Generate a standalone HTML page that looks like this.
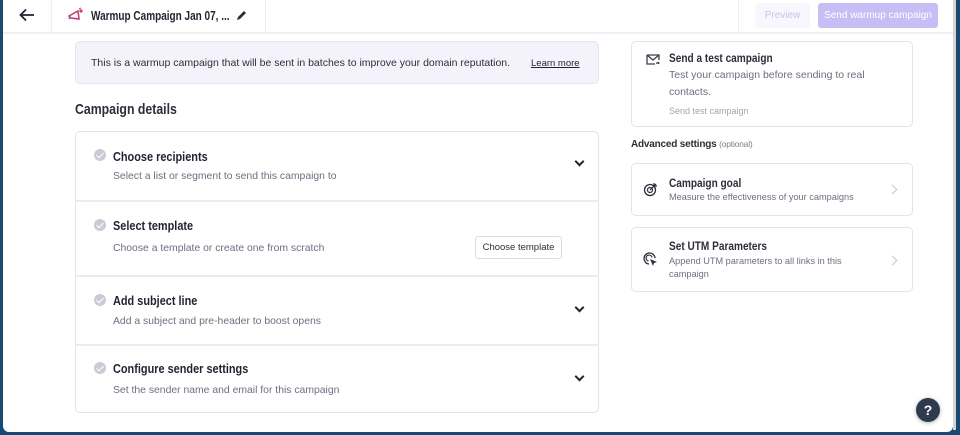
<!DOCTYPE html>
<html><head><style>
*{box-sizing:border-box;margin:0;padding:0}
body{width:960px;height:435px;overflow:hidden;background:#174a73;font-family:"Liberation Sans",sans-serif;color:#1f2430;position:relative}
.app{position:absolute;left:3px;top:0;width:950px;height:432px;background:#fff;border-radius:0 0 6px 6px;overflow:hidden}
.sb{position:absolute;left:953px;top:0;width:3px;height:430px;background:#d4d4d4}
.hdr{position:absolute;left:0;top:0;width:950px;height:34px;border-bottom:2px solid #f0f0f2}
.vd{position:absolute;top:0;height:34px;width:1px;background:#eeeef0}
.t{position:absolute;white-space:nowrap}
.sx{transform-origin:left center;transform:scaleX(.84)}
.box{position:absolute;border:1px solid #e3e3e8;border-radius:5px;background:#fff}
.row{position:absolute;left:0;width:523px;border-top:2px solid #ececef}
.ck{position:absolute;left:18px;width:12px;height:12px;border-radius:50%;background:#c9ccd4}
.ck:after{content:"";position:absolute;left:4px;top:2px;width:3px;height:6px;border:solid #fff;border-width:0 1.3px 1.3px 0;transform:rotate(45deg)}
.rt{position:absolute;left:37px;font-size:13px;font-weight:bold;color:#1f2430;white-space:nowrap;transform-origin:left center;transform:scaleX(.84)}
.rs{position:absolute;left:37px;font-size:10.4px;color:#6b7080;white-space:nowrap}
.chev{position:absolute;right:16px;width:7px;height:7px;border:solid #1f2430;border-width:0 2px 2px 0;transform:rotate(45deg)}
.rc{position:absolute;right:16px;width:7px;height:7px;border:solid #c4c6cc;border-width:1.5px 1.5px 0 0;transform:rotate(45deg)}
</style></head><body>
<div class="app">
<div class="hdr">
 <svg class="t" style="left:16px;top:8px" width="16" height="14" viewBox="0 0 16 14"><path d="M15 7H2M7 1.5L1.5 7 7 12.5" stroke="#1f2430" stroke-width="1.8" fill="none"/></svg>
 <div class="vd" style="left:48px"></div>
 <svg class="t" style="left:64px;top:7px" width="18" height="16" viewBox="0 0 18 16"><path d="M2 9l9-5 1 8-8-1z" fill="none" stroke="#c03a6a" stroke-width="1.5"/><path d="M3 10l-1 2" stroke="#7b5fd6" stroke-width="1.5"/><circle cx="14" cy="4" r="1.6" fill="#e0395f"/><path d="M12 2l2-1" stroke="#7b5fd6" stroke-width="1.2"/></svg>
 <div class="t sx" style="left:88px;top:9px;font-size:12.5px;font-weight:bold;transform:scaleX(.8)">Warmup Campaign Jan 07, ...</div>
 <svg class="t" style="left:233px;top:9px" width="12" height="12" viewBox="0 0 12 12"><path d="M1 11l1-3 6-6 2 2-6 6z" fill="#2b2f38"/></svg>
 <div class="vd" style="left:262px"></div>
 <div class="vd" style="left:735px"></div>
 <div class="t" style="left:752px;top:3px;width:55px;height:25px;background:#f8f7fd;border-radius:3px;color:#c8c2ea;font-size:10px;text-align:center;line-height:25px">Preview</div>
 <div class="t" style="left:815px;top:3px;width:120px;height:25px;background:#c8bdf5;border-radius:3px;color:#fff;font-size:10px;text-align:center;line-height:25px">Send warmup campaign</div>
</div>

<div class="box" style="left:72px;top:41px;width:524px;height:43px;background:#f4f3fb;border-color:#e6e3f3">
 <div class="t" style="left:15px;top:15px;font-size:10.5px;color:#2b2f38">This is a warmup campaign that will be sent in batches to improve your domain reputation.</div>
 <div class="t" style="left:455px;top:16px;font-size:9.5px;color:#1f2430;text-decoration:underline">Learn more</div>
</div>
<div class="t sx" style="left:72px;top:101px;font-size:15px;font-weight:bold;color:#2b2f38;transform:scaleX(.82)">Campaign details</div>

<div class="box" style="left:72px;top:131px;width:524px;height:282px;overflow:hidden">
 <div class="row" style="top:-2px;height:70px;border-top:none">
  <div class="ck" style="top:19px"></div><div class="rt" style="top:19px">Choose recipients</div><div class="rs" style="top:41px">Select a list or segment to send this campaign to</div><div class="chev" style="top:28px"></div>
 </div>
 <div class="row" style="top:68px;height:75px">
  <div class="ck" style="top:17px"></div><div class="rt" style="top:16px">Select template</div><div class="rs" style="top:41px">Choose a template or create one from scratch</div>
  <div class="t" style="left:399px;top:34px;width:87px;height:23px;border:1px solid #dcdce0;border-radius:3px;font-size:9.5px;line-height:21px;text-align:center;color:#2b2f38">Choose template</div>
 </div>
 <div class="row" style="top:143px;height:69px">
  <div class="ck" style="top:17px"></div><div class="rt" style="top:16px">Add subject line</div><div class="rs" style="top:39px">Add a subject and pre-header to boost opens</div><div class="chev" style="top:27px"></div>
 </div>
 <div class="row" style="top:212px;height:70px">
  <div class="ck" style="top:16px"></div><div class="rt" style="top:15px">Configure sender settings</div><div class="rs" style="top:39px">Set the sender name and email for this campaign</div><div class="chev" style="top:27px"></div>
 </div>
</div>

<div class="box" style="left:628px;top:41px;width:282px;height:86px">
 <svg class="t" style="left:14px;top:12px" width="14" height="12" viewBox="0 0 14 12"><path d="M1 1h12v5M1 1v9h8M1 1l6 5 6-5" fill="none" stroke="#3a3f4a" stroke-width="1.3"/><path d="M10 9h3M12 8l1 1-1 1" stroke="#3a3f4a" stroke-width="1.2" fill="none"/></svg>
 <div class="t sx" style="left:37px;top:9px;font-size:12px;font-weight:bold;color:#2b2f38">Send a test campaign</div>
 <div class="t" style="left:37px;top:25px;font-size:10.5px;color:#6b7080;line-height:16.5px;white-space:normal;width:215px">Test your campaign before sending to real contacts.</div>
 <div class="t" style="left:37px;top:64px;font-size:9px;color:#a3a6b0">Send test campaign</div>
</div>
<div class="t" style="left:628px;top:139px;font-size:10px;font-weight:bold;color:#2b2f38;letter-spacing:-.2px">Advanced settings <span style="font-weight:normal;font-size:8.5px;color:#7b7f8a">(optional)</span></div>

<div class="box" style="left:628px;top:163px;width:282px;height:53px">
 <svg class="t" style="left:11px;top:18px" width="15" height="15" viewBox="0 0 15 15"><circle cx="7" cy="8" r="5.5" fill="none" stroke="#2b2f38" stroke-width="1.3"/><circle cx="7" cy="8" r="2.5" fill="none" stroke="#2b2f38" stroke-width="1.2"/><path d="M7 8l6-6M11 1v3h3" stroke="#2b2f38" stroke-width="1.2" fill="none"/></svg>
 <div class="t sx" style="left:37px;top:12px;font-size:12px;font-weight:bold;color:#2b2f38">Campaign goal</div>
 <div class="t" style="left:37px;top:28px;font-size:9.2px;color:#6b7080">Measure the effectiveness of your campaigns</div>
 <div class="rc" style="top:22px"></div>
</div>
<div class="box" style="left:628px;top:227px;width:282px;height:65px">
 <svg class="t" style="left:11px;top:24px" width="15" height="15" viewBox="0 0 15 15"><path d="M12 6A5.5 5.5 0 1 0 6 12" fill="none" stroke="#2b2f38" stroke-width="1.3"/><path d="M9 5.5A3 3 0 1 0 5.5 9" fill="none" stroke="#2b2f38" stroke-width="1.2"/><path d="M7 7l7 3-3 1-1 3z" fill="#2b2f38"/></svg>
 <div class="t sx" style="left:37px;top:11px;font-size:12px;font-weight:bold;color:#2b2f38">Set UTM Parameters</div>
 <div class="t" style="left:37px;top:27px;font-size:9.2px;color:#6b7080;line-height:13px;white-space:normal;width:200px">Append UTM parameters to all links in this campaign</div>
 <div class="rc" style="top:29px"></div>
</div>

<div class="t" style="left:913px;top:398px;width:24px;height:24px;border-radius:50%;background:#2f3a4e;color:#fff;font-size:14px;font-weight:bold;text-align:center;line-height:24px;box-shadow:0 1px 4px rgba(0,0,0,.3)">?</div>
</div>
<div class="sb"></div>
</body></html>
